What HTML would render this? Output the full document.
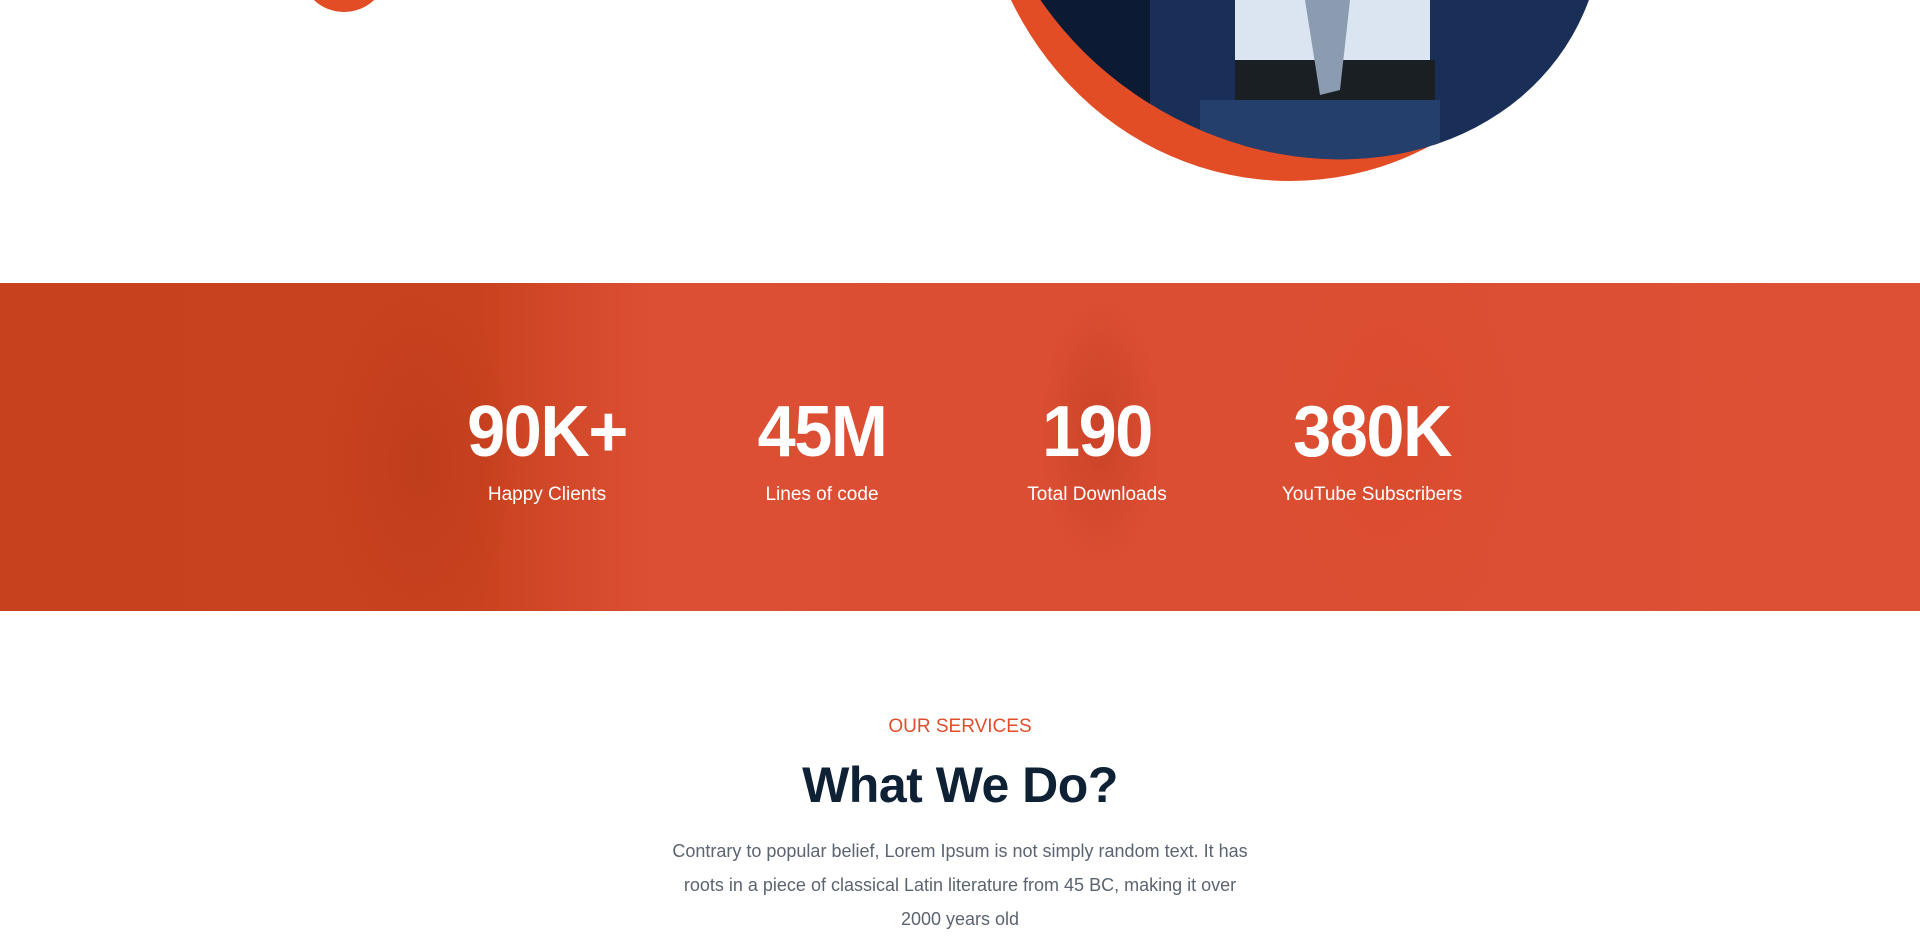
<!DOCTYPE html>
<html><head><style>
html,body{margin:0;padding:0;width:1920px;height:952px;overflow:hidden;background:#fff;font-family:"Liberation Sans",sans-serif;position:relative}
.band{position:absolute;left:0;top:283px;width:1920px;height:328px;
background:
radial-gradient(ellipse 140px 260px at 420px 180px,rgba(180,55,25,.45),transparent 70%),
radial-gradient(ellipse 90px 200px at 1100px 150px,rgba(180,55,25,.45),transparent 70%),
radial-gradient(ellipse 200px 300px at 1400px 150px,rgba(215,70,35,.35),transparent 70%),
linear-gradient(90deg,#c8411f 0%,#c9421f 25%,#dd4f34 34%,#dc4e33 60%,#de5035 100%);}
.stat{position:absolute;width:300px;text-align:center;color:#fff}
.num{font-weight:bold;font-size:72px;letter-spacing:-1.5px;line-height:1;transform:scaleX(.95)}
.lbl{font-size:19px;margin-top:16px}
.sub{position:absolute;top:716px;width:1920px;text-align:center;color:#e04e2b;font-size:19px}
h2{position:absolute;top:756px;width:1920px;text-align:center;margin:0;font-size:50px;color:#0e2135;font-weight:bold;letter-spacing:-.5px}
p{position:absolute;top:834px;left:667px;width:586px;text-align:center;margin:0;color:#5b6470;font-size:18px;line-height:34px}
</style></head><body>
<svg width="1920" height="260" style="position:absolute;left:0;top:0">
<circle cx="344" cy="-32" r="44" fill="#e24d26"/>
<ellipse cx="1290" cy="-150" rx="313" ry="331" fill="#e24d26"/>
<defs><clipPath id="c"><ellipse cx="1295" cy="-124" rx="320" ry="270" transform="rotate(30 1295 -124)"/></clipPath></defs>
<g clip-path="url(#c)">
<rect x="1000" y="0" width="650" height="200" fill="#1a2f58"/>
<rect x="1040" y="0" width="110" height="200" fill="#0c1a33"/>
<rect x="1235" y="0" width="195" height="60" fill="#dae5f1"/>
<rect x="1235" y="60" width="200" height="40" fill="#1a1f24"/>
<rect x="1200" y="100" width="240" height="80" fill="#253f6d"/>
<polygon points="1305,0 1350,0 1340,90 1320,95" fill="#8b9bb0"/>
</g>
</svg>
<div class="band">
<div class="stat" style="left:397px;top:113px"><div class="num">90K+</div><div class="lbl">Happy Clients</div></div>
<div class="stat" style="left:672px;top:113px"><div class="num">45M</div><div class="lbl">Lines of code</div></div>
<div class="stat" style="left:947px;top:113px"><div class="num">190</div><div class="lbl">Total Downloads</div></div>
<div class="stat" style="left:1222px;top:113px"><div class="num">380K</div><div class="lbl">YouTube Subscribers</div></div>
</div>
<div class="sub">OUR SERVICES</div>
<h2>What We Do?</h2>
<p>Contrary to popular belief, Lorem Ipsum is not simply random text. It has roots in a piece of classical Latin literature from 45 BC, making it over 2000 years old</p>
</body></html>
